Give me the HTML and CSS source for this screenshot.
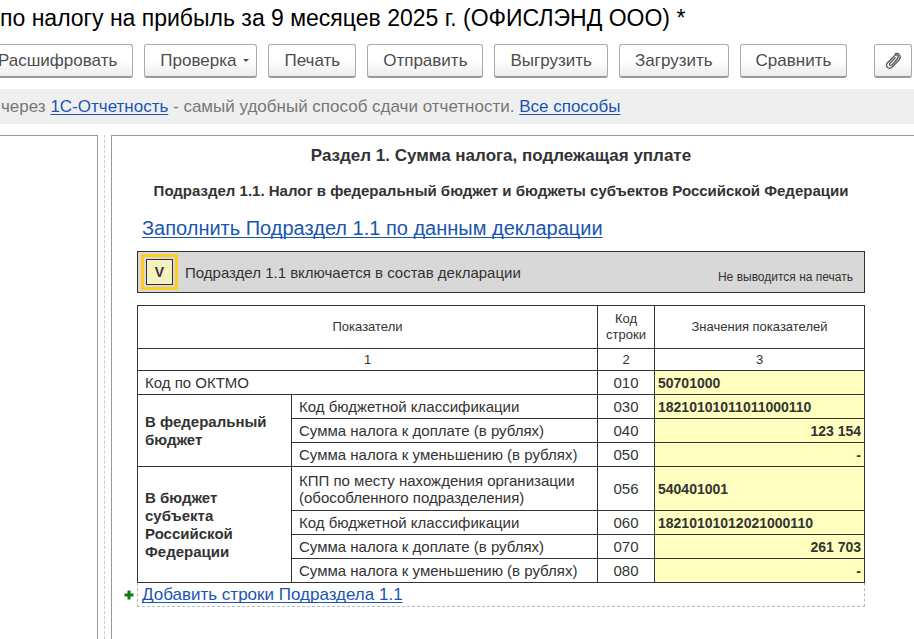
FILE: index.html
```html
<!DOCTYPE html>
<html lang="ru">
  <head>
    <meta charset="utf-8">
    <title>Декларация по налогу на прибыль</title>
    <link rel="stylesheet" href="styles.css">
  </head>

  <body>
    <h1 class="title">по налогу на прибыль за 9 месяцев 2025 г. (ОФИСЛЭНД ООО) *</h1>

    <div class="toolbar">
      <button class="btn" type="button">Расшифровать</button>
      <button class="btn btn-menu" type="button">Проверка <span class="caret"></span></button>
      <button class="btn" type="button">Печать</button>
      <button class="btn" type="button">Отправить</button>
      <button class="btn" type="button">Выгрузить</button>
      <button class="btn" type="button">Загрузить</button>
      <button class="btn" type="button">Сравнить</button>
      <button class="btn btn-icon" type="button" aria-label="Файлы">
        <svg width="18" height="18" viewBox="0 0 18 18" fill="none" stroke="#555" stroke-width="1.3" stroke-linecap="round">
          <path d="M11.2 5.8 L6.4 10.8 C4.6 12.8 6.4 14.4 8.2 12.6 L13.2 7 C15.8 4 12.8 1.6 10.2 4 L4 10.2 C0.4 14 4.4 18.6 8.4 14.8 L14.8 8.2 C17.8 4.8 15.4 0.4 11.2 1.8"/>
        </svg>
      </button>
    </div>

    <div class="info">через <a href="#">1С-Отчетность</a> - самый удобный способ сдачи отчетности. <a href="#">Все способы</a></div>

    <div class="work">
      <div class="tree"></div>
      <div class="splitter"></div>
      <div class="sheet">
        <h2 class="section">Раздел 1. Сумма налога, подлежащая уплате</h2>
        <h3 class="subsection">Подраздел 1.1. Налог в федеральный бюджет и бюджеты субъектов Российской Федерации</h3>
        <a class="fill" href="#">Заполнить Подраздел 1.1 по данным декларации</a>

        <div class="include">
          <label class="include-label">
            <span class="tick"><input type="checkbox" checked><span class="mark">V</span></span>
            Подраздел 1.1 включается в состав декларации
          </label>
          <span class="noprint">Не выводится на печать</span>
        </div>

        <table class="data">
          <colgroup>
            <col class="c-group">
            <col>
            <col class="c-code">
            <col class="c-value">
          </colgroup>
          <thead>
            <tr class="head">
              <th colspan="2">Показатели</th>
              <th>Код строки</th>
              <th>Значения показателей</th>
            </tr>
            <tr class="nums">
              <th colspan="2">1</th>
              <th>2</th>
              <th>3</th>
            </tr>
          </thead>
          <tbody>
            <tr>
              <td colspan="2"><label for="r010">Код по ОКТМО</label></td>
              <td class="code">010</td>
              <td class="value"><input id="r010" type="text" value="50701000"></td>
            </tr>
            <tr>
              <th class="group" rowspan="3">В федеральный бюджет</th>
              <td><label for="r030">Код бюджетной классификации</label></td>
              <td class="code">030</td>
              <td class="value"><input id="r030" type="text" value="18210101011011000110"></td>
            </tr>
            <tr>
              <td><label for="r040">Сумма налога к доплате (в рублях)</label></td>
              <td class="code">040</td>
              <td class="value sum"><input id="r040" type="text" value="123 154"></td>
            </tr>
            <tr>
              <td><label for="r050">Сумма налога к уменьшению (в рублях)</label></td>
              <td class="code">050</td>
              <td class="value sum"><input id="r050" type="text" value="-"></td>
            </tr>
            <tr class="tall">
              <th class="group" rowspan="4">В бюджет субъекта Российской Федерации</th>
              <td><label for="r056">КПП по месту нахождения организации (обособленного подразделения)</label></td>
              <td class="code">056</td>
              <td class="value"><input id="r056" type="text" value="540401001"></td>
            </tr>
            <tr>
              <td><label for="r060">Код бюджетной классификации</label></td>
              <td class="code">060</td>
              <td class="value"><input id="r060" type="text" value="18210101012021000110"></td>
            </tr>
            <tr>
              <td><label for="r070">Сумма налога к доплате (в рублях)</label></td>
              <td class="code">070</td>
              <td class="value sum"><input id="r070" type="text" value="261 703"></td>
            </tr>
            <tr>
              <td><label for="r080">Сумма налога к уменьшению (в рублях)</label></td>
              <td class="code">080</td>
              <td class="value sum"><input id="r080" type="text" value="-"></td>
            </tr>
          </tbody>
        </table>

        <div class="add">
          <svg class="plus" width="10" height="10" viewBox="0 0 10 10" fill="#0a7d0a">
            <path d="M3.5 0.5h3v3h3v3h-3v3h-3v-3h-3v-3h3z"/>
          </svg>
          <a href="#">Добавить строки Подраздела 1.1</a>
        </div>
      </div>
    </div>
  </body>
</html>
```
FILE: styles.css
```css
* {
  box-sizing: border-box;
}
body {
  margin: 0;
  min-height: 100vh;
  display: flex;
  flex-direction: column;
  overflow: hidden;
  font-family: "Liberation Sans", Arial, sans-serif;
  font-size: 15px;
  color: #333;
  background-color: #fff;
}
a {
  color: #1a55b0;
  text-decoration: underline;
  text-decoration-thickness: 1px;
  text-decoration-skip-ink: none;
  text-underline-offset: 2px;
}
.title {
  margin: 0;
  padding-top: 4px;
  font-size: 23px;
  font-weight: normal;
  line-height: 28px;
  color: #000;
  white-space: nowrap;
}

/* toolbar */
.toolbar {
  display: flex;
  gap: 11px;
  margin: 12px 0 11px -18px;
}
.btn {
  flex: none;
  height: 34px;
  padding: 0 15px;
  border: 1px solid #aaa;
  border-bottom: 2px solid #999;
  border-radius: 3px;
  background: linear-gradient(#fff 50%, #ececec);
  font-family: inherit;
  font-size: 17px;
  color: #4d4d4d;
}
.btn-menu {
  display: flex;
  align-items: center;
  gap: 7px;
  padding-right: 7px;
}
.caret {
  border: 3px solid transparent;
  border-top-color: #4d4d4d;
  border-bottom: 0;
}
.btn-icon {
  display: flex;
  align-items: center;
  justify-content: center;
  width: 38px;
  margin-left: 16px;
  padding: 0;
}

.info {
  padding-left: 1px;
  background-color: #efefef;
  font-size: 17px;
  line-height: 35px;
  color: #777;
  white-space: nowrap;
}

/* work area */
.work {
  flex: 1;
  display: flex;
  margin-top: 11px;
}
.tree {
  flex: none;
  width: 98px;
  border-top: 1px solid #999;
  border-right: 1px solid #999;
}
.splitter {
  flex: none;
  width: 7px;
  margin-right: 6px;
  border-right: 1px dashed #ccc;
}
.sheet {
  flex: 1;
  padding: 10px 49px 0 25px;
  border-top: 1px solid #999;
  border-left: 1px solid #999;
}
.section {
  margin: 0;
  font-size: 17px;
  line-height: 20px;
  text-align: center;
}
.subsection {
  margin: 15px 0 0;
  font-size: 15px;
  line-height: 20px;
  text-align: center;
}
.fill {
  display: block;
  width: fit-content;
  margin: 15px 0 11px 5px;
  font-size: 20px;
  line-height: 24px;
}
.include {
  display: flex;
  justify-content: space-between;
  height: 42px;
  padding: 2px 11px 2px 3px;
  border: 1px solid #333;
  background-color: #d8d8d8;
}
.include-label {
  display: flex;
  align-items: center;
  gap: 7px;
}
.tick {
  position: relative;
  width: 37px;
  height: 36px;
  padding: 2px;
  border: 3px solid #fc2;
}
.tick input {
  position: absolute;
  inset: 0;
  width: 100%;
  height: 100%;
  margin: 0;
  opacity: 0;
}
.mark {
  display: block;
  border: 1px solid #333;
  background-color: #f4f2c0;
  font-size: 14px;
  font-weight: bold;
  line-height: 24px;
  text-align: center;
}
.noprint {
  align-self: flex-end;
  font-size: 12px;
  line-height: 26px;
}

/* table */
.data {
  width: 100%;
  margin-top: 12px;
  border-collapse: collapse;
  table-layout: fixed;
}
.c-group {
  width: 154px;
}
.c-code {
  width: 57px;
}
.c-value {
  width: 210px;
}
.data th,
.data td {
  height: 24px;
  padding: 0 7px;
  border: 1px solid #333;
  line-height: 17px;
  text-align: left;
}
.data .head th,
.data .nums th {
  height: 43px;
  padding: 0;
  font-size: 13px;
  font-weight: normal;
  line-height: 16px;
  text-align: center;
}
.data .nums th {
  height: 22px;
}
.data .tall td {
  height: 44px;
}
.data .group {
  padding-right: 20px;
  line-height: 18px;
}
.data .code {
  padding: 0;
  text-align: center;
}
.data .value {
  padding: 0 3px;
  background-color: #ffffbf;
}
.value input {
  display: block;
  width: 100%;
  padding: 0;
  border: 0;
  background: none;
  font-family: inherit;
  font-size: 14px;
  font-weight: bold;
  color: #333;
}
.sum input {
  text-align: right;
}

.add {
  position: relative;
  height: 24px;
  padding-left: 4px;
  border: 1px dashed #bbb;
  border-top: 0;
  font-size: 17px;
  line-height: 24px;
}
.plus {
  position: absolute;
  top: 7px;
  left: -14px;
}
```
